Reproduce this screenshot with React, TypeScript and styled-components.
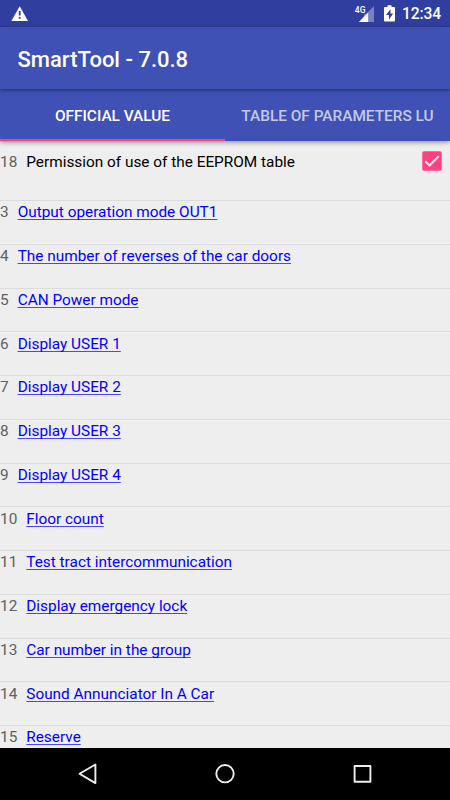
import React from "react";
import styled, { createGlobalStyle } from "styled-components";

const GlobalStyle = createGlobalStyle`
  * { box-sizing: border-box; }
  body { margin: 0; font-family: Roboto, sans-serif; }
`;

const Screen = styled.div`
  width: 450px;
  height: 800px;
  display: flex;
  flex-direction: column;
  overflow: hidden;
  background: #eeeeee;
`;

const StatusBar = styled.div`
  height: 27px;
  flex: none;
  display: flex;
  align-items: center;
  background: #303f9f;
  color: #fff;
  padding: 0 9px 0 11px;
`;

const StatusIcons = styled.div`
  margin-left: auto;
  display: flex;
  align-items: center;
`;

const SignalIcon = styled.svg`
  margin-top: 0;
`;

const BatteryIcon = styled.svg`
  margin: 0 0 0 9px;
`;

const Clock = styled.span`
  font-size: 15.6px;
  font-weight: 500;
  line-height: 25px;
  margin-left: 6.5px;
  padding-top: 2px;
  letter-spacing: -0.1px;
`;

const Toolbar = styled.header`
  height: 62px;
  flex: none;
  display: flex;
  align-items: center;
  padding: 3px 0 0 17.5px;
  background: #3f51b5;
  color: #fff;
  z-index: 2;
  box-shadow: 0 1px 4px rgba(0, 0, 0, 0.5);
`;

const Title = styled.h1`
  margin: 0;
  font-size: 22px;
  line-height: 28px;
  font-weight: 500;
`;

const Tabs = styled.nav`
  height: 52px;
  flex: none;
  display: grid;
  grid-template-columns: 1fr 1fr;
  background: #3f51b5;
  z-index: 1;
  box-shadow: 0 1px 5px rgba(0, 0, 0, 0.45);
`;

const Tab = styled.div<{ $active?: boolean }>`
  display: flex;
  align-items: center;
  justify-content: center;
  font-size: 15.4px;
  font-weight: 500;
  white-space: nowrap;
  padding-top: 4px;
  color: ${(p) => (p.$active ? "#fff" : "rgba(255,255,255,0.7)")};
  border-bottom: 2px solid ${(p) => (p.$active ? "#ff4081" : "#3f51b5")};
`;

const List = styled.main`
  flex: 1;
  min-height: 0;
  overflow: hidden;
`;

const Row = styled.div<{ $tall?: boolean }>`
  height: ${(p) => (p.$tall ? "60px" : "43.75px")};
  display: flex;
  align-items: flex-start;
  padding: ${(p) => (p.$tall ? "9.5px 8px 0 0" : "0.25px 8px 0 0")};
  border-bottom: 1px solid #dcdcdc;
  font-size: 15.36px;
  line-height: 22px;
  white-space: nowrap;
`;

const Index = styled.span`
  color: #606060;
  margin-right: 9px;
`;

const Label = styled.span`
  flex: 1;
  color: #000;
`;

const Link = styled.a`
  color: #0000ff;
  text-decoration: underline;
  text-decoration-color: rgba(0, 0, 255, 0.7);
  text-decoration-thickness: 1px;
  text-underline-offset: 2px;
  text-decoration-skip-ink: none;
`;

const NavBar = styled.footer`
  height: 52px;
  flex: none;
  display: flex;
  justify-content: center;
  background: #000;
`;

const items: [number, string][] = [
  [3, "Output operation mode OUT1"],
  [4, "The number of reverses of the car doors"],
  [5, "CAN Power mode"],
  [6, "Display USER 1"],
  [7, "Display USER 2"],
  [8, "Display USER 3"],
  [9, "Display USER 4"],
  [10, "Floor count"],
  [11, "Test tract intercommunication"],
  [12, "Display emergency lock"],
  [13, "Car number in the group"],
  [14, "Sound Annunciator In A Car"],
  [15, "Reserve"],
];

const NetworkTag = styled.span`
  font-size: 8.5px;
  line-height: 9px;
  font-weight: 500;
  margin: -7px -6px 0 0;
`;

export default function App() {
  return (
    <Screen>
      <GlobalStyle />
      <StatusBar>
        <svg width="18" height="17" viewBox="0 0 18 17">
          <path d="M8.7 1.2 17 16H.4Z" fill="#fff" />
          <path d="M7.8 6h1.8v4.5H7.8zM7.8 12h1.8v1.8H7.8z" fill="#303f9f" />
        </svg>
        <StatusIcons>
          <NetworkTag>4G</NetworkTag>
          <SignalIcon width="16" height="16" viewBox="0 0 16 16">
            <path d="M15 0V16H0L5 10V8H7Z" fill="#fff" opacity=".35" />
            <path d="M9.2 6.5V16H0Z" fill="#fff" />
          </SignalIcon>
          <BatteryIcon width="11" height="17" viewBox="0 0 11 17">
            <path d="M1 2h2.5V.3h4V2H10q1 0 1 1v12.5q0 1-1 1H1q-1 0-1-1V3Q0 2 1 2Z" fill="#fff" />
            <path d="M6.5 4.2 2 10h3v4.4l4.2-6H6.5Z" fill="#303f9f" />
          </BatteryIcon>
          <Clock>12:34</Clock>
        </StatusIcons>
      </StatusBar>
      <Toolbar>
        <Title>SmartTool - 7.0.8</Title>
      </Toolbar>
      <Tabs>
        <Tab $active>OFFICIAL VALUE</Tab>
        <Tab>TABLE OF PARAMETERS LU</Tab>
      </Tabs>
      <List>
        <Row $tall>
          <Index>18</Index>
          <Label>Permission of use of the EEPROM table</Label>
          <svg width="20" height="20" viewBox="0 0 20 20">
            <rect x=".3" y=".3" width="19.4" height="19.4" rx="1.7" fill="#ff4081" />
            <path d="m3.2 10.2 4.3 4.3 9.2-9.2" fill="none" stroke="#eee" strokeWidth="2" />
          </svg>
        </Row>
        {items.map(([n, text]) => (
          <Row key={n}>
            <Index>{n}</Index>
            <Link>{text}</Link>
          </Row>
        ))}
      </List>
      <NavBar>
        <svg width="300" height="52" viewBox="75 748 300 52" fill="none" stroke="#eee" strokeWidth="1.9" strokeLinejoin="round">
          <path d="M79.5 773.8 95.4 764.5V783.1Z" />
          <circle cx="225" cy="773.7" r="8.7" />
          <rect x="354.6" y="766" width="15.8" height="15.8" />
        </svg>
      </NavBar>
    </Screen>
  );
}
